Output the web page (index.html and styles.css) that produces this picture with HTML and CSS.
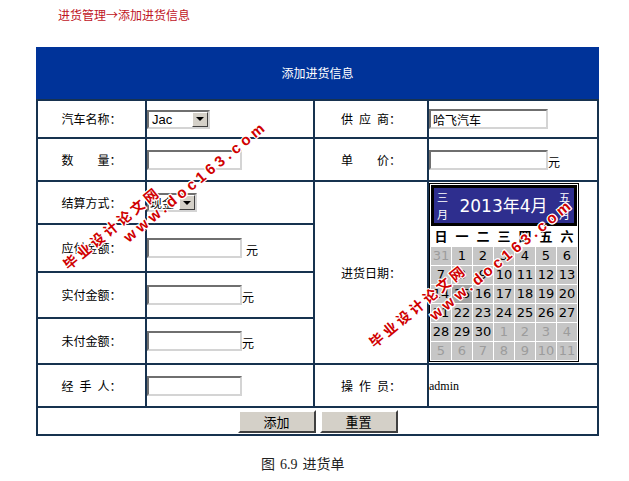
FILE: index.html
```html
<!DOCTYPE html>
<html lang="zh-CN">
<head>
<meta charset="utf-8">
<title>添加进货信息</title>
<link rel="stylesheet" href="styles.css">
</head>
<body>
<div class="crumb">进货管理→添加进货信息</div>

<div class="form">
  <div class="form-head">添加进货信息</div>
  <div class="form-grid">
    <div class="cell label">汽车名称：</div>
    <div class="cell">
      <div class="select sel-car"><span class="sel-text">Jac</span><span class="sel-btn"><span class="arrow"></span></span></div>
    </div>
    <div class="cell label">供&ensp;应&ensp;商：</div>
    <div class="cell"><input class="txt txt-wide" type="text" value="哈飞汽车"></div>

    <div class="cell label">数　　量：</div>
    <div class="cell"><input class="txt" type="text"></div>
    <div class="cell label">单　　价：</div>
    <div class="cell"><div class="field"><input class="txt txt-wide" type="text"><span class="unit">元</span></div></div>

    <div class="cell label">结算方式：</div>
    <div class="cell">
      <div class="select sel-pay"><span class="sel-text sel-cn">现金</span><span class="sel-btn"><span class="arrow"></span></span></div>
    </div>
    <div class="cell label span4">进货日期：</div>
    <div class="cell span4">
      <div class="cal">
        <div class="cal-head">
          <span class="cal-nav"><span class="nav-ch">三</span><span class="nav-ch">月</span></span>
          <span class="cal-title">2013年4月</span>
          <span class="cal-nav"><span class="nav-ch">五</span><span class="nav-ch">月</span></span>
        </div>
        <div class="cal-week"><span>日</span><span>一</span><span>二</span><span>三</span><span>四</span><span>五</span><span>六</span></div>
        <div class="cal-days">
          <span class="other">31</span><span>1</span><span>2</span><span>3</span><span>4</span><span>5</span><span>6</span>
          <span>7</span><span>8</span><span>9</span><span>10</span><span>11</span><span>12</span><span>13</span>
          <span>14</span><span class="today">15</span><span>16</span><span>17</span><span>18</span><span>19</span><span>20</span>
          <span>21</span><span>22</span><span>23</span><span>24</span><span>25</span><span>26</span><span>27</span>
          <span>28</span><span>29</span><span>30</span><span class="other">1</span><span class="other">2</span><span class="other">3</span><span class="other">4</span>
          <span class="other">5</span><span class="other">6</span><span class="other">7</span><span class="other">8</span><span class="other">9</span><span class="other">10</span><span class="other">11</span>
        </div>
      </div>
    </div>

    <div class="cell label">应付金额：</div>
    <div class="cell"><div class="field"><input class="txt" type="text"><span class="unit unit-gap">元</span></div></div>

    <div class="cell label">实付金额：</div>
    <div class="cell"><div class="field"><input class="txt" type="text"><span class="unit">元</span></div></div>

    <div class="cell label">未付金额：</div>
    <div class="cell"><div class="field"><input class="txt" type="text"><span class="unit">元</span></div></div>

    <div class="cell label">经&ensp;手&ensp;人：</div>
    <div class="cell"><input class="txt" type="text"></div>
    <div class="cell label">操&ensp;作&ensp;员：</div>
    <div class="cell"><span class="plain">admin</span></div>

    <div class="cell actions">
      <button class="btn" type="button">添加</button>
      <button class="btn" type="button">重置</button>
    </div>
  </div>
</div>

<div class="caption">图<span class="num">6.9</span>进货单</div>

<div class="wm wm-1"><div class="wm-cn">毕业设计论文网</div><div class="wm-en">www.doc163.com</div></div>
<div class="wm wm-2"><div class="wm-cn">毕业设计论文网</div><div class="wm-en">www.doc163.com</div></div>
</body>
</html>
```

FILE: styles.css
```css
html, body {
  margin: 0;
  padding: 0;
  background: #fff;
}

body {
  width: 629px;
  font-family: "Noto Sans CJK SC", sans-serif;
  font-size: 12px;
  line-height: 14px;
  color: #000;
}

.crumb {
  padding: 8px 0 0 58px;
  color: #c0141e;
  font-size: 12px;
  line-height: 14px;
}

.form {
  width: 563px;
  margin: 25px 0 0 36px;
}

.form-head {
  height: 52px;
  background: #003399;
  color: #fff;
  display: flex;
  align-items: center;
  justify-content: center;
  font-size: 12px;
}

.form-grid {
  display: grid;
  grid-template-columns: 107px 166px 112px 168px;
  grid-template-rows: 36px 41px 41px 46px 44px 44px 41px 26px;
  gap: 2px;
  padding: 2px;
  background: #17324f;
}

.cell {
  background: #fff;
  display: flex;
  align-items: center;
  justify-content: flex-start;
}

.label {
  justify-content: center;
}

.span4 {
  grid-row: span 4;
}

.actions {
  grid-column: 1 / -1;
  justify-content: center;
  gap: 4px;
}

.txt {
  box-sizing: border-box;
  width: 95px;
  height: 20px;
  margin: 0;
  padding: 0 2px;
  border: 2px solid;
  border-color: #6f6f6f #d4d4d4 #d4d4d4 #6f6f6f;
  background: #fff;
  font-family: "Noto Sans CJK SC", sans-serif;
  font-size: 12px;
  color: #000;
  outline: none;
}

.txt-wide {
  width: 119px;
}

.field {
  display: flex;
  align-items: flex-end;
}

.unit {
  line-height: 14px;
  margin-bottom: 1px;
}

.unit-gap {
  margin-left: 4px;
}

.select {
  box-sizing: border-box;
  display: flex;
  height: 19px;
  border: 2px solid;
  border-color: #6f6f6f #d4d4d4 #d4d4d4 #6f6f6f;
  background: #fff;
}

.sel-car {
  width: 63px;
}

.sel-pay {
  width: 50px;
}

.sel-text {
  flex: 1;
  padding-left: 3px;
  font-family: "Liberation Sans", sans-serif;
  font-size: 13px;
  line-height: 15px;
  overflow: hidden;
  white-space: nowrap;
}

.sel-cn {
  font-family: "Noto Sans CJK SC", sans-serif;
  font-size: 12px;
  padding-left: 1px;
}

.sel-btn {
  box-sizing: border-box;
  width: 16px;
  background: #d4d0c8;
  border: 1px solid;
  border-color: #fff #404040 #404040 #fff;
  display: flex;
  align-items: center;
  justify-content: center;
}

.arrow {
  width: 0;
  height: 0;
  border-left: 4px solid transparent;
  border-right: 4px solid transparent;
  border-top: 4px solid #000;
}

.plain {
  font-family: "Liberation Serif", serif;
  font-size: 12px;
}

.btn {
  box-sizing: border-box;
  width: 78px;
  height: 23px;
  margin: 0;
  padding: 0;
  background: #d4d0c8;
  border: 2px solid;
  border-color: #fff #404040 #404040 #fff;
  font-family: "Noto Sans CJK SC", sans-serif;
  font-size: 13px;
  color: #000;
}

/* calendar */
.cal {
  box-sizing: border-box;
  width: 150px;
  border: 1px solid #000;
  padding: 1px;
  background: #fff;
}

.cal-head {
  height: 35px;
  border: 3px solid #000;
  background: #2e2e8e;
  color: #fff;
  display: flex;
  align-items: center;
  padding: 0 4px 0 3px;
}

.cal-nav {
  width: 11px;
  display: flex;
  flex-direction: column;
  gap: 3px;
  align-items: center;
}

.nav-ch {
  display: block;
  font-size: 11px;
  line-height: 14px;
}

.cal-title {
  flex: 1;
  text-align: center;
  font-family: "DejaVu Sans", "Noto Sans CJK SC", sans-serif;
  font-size: 17px;
  line-height: 20px;
}

.cal-week {
  display: grid;
  grid-template-columns: repeat(7, 20px);
  column-gap: 1px;
  height: 20px;
  font-weight: bold;
  font-size: 13px;
  line-height: 20px;
  text-align: center;
}

.cal-days {
  display: grid;
  grid-template-columns: repeat(7, 20px);
  grid-auto-rows: 18px;
  gap: 1px;
  margin-top: 1px;
}

.cal-days span {
  background: #c6c6c6;
  text-align: center;
  font-family: "DejaVu Sans", sans-serif;
  font-size: 13px;
  line-height: 18px;
  color: #000;
}

.cal-days .other {
  color: #9c9c9c;
}

.cal-days .today {
  background: #a4a4a4;
}

.caption {
  margin: 19px 0 0 261px;
  font-size: 14px;
  line-height: 16px;
  color: #222;
}

.caption .num {
  font-family: "Liberation Serif", serif;
  margin: 0 5px;
}

/* watermark overlay */
.wm {
  position: absolute;
  transform: rotate(-39.5deg);
  transform-origin: 0 0;
  color: #d00000;
  font-weight: bold;
  white-space: nowrap;
  pointer-events: none;
  text-shadow: 1px 0 0 #fff, -1px 0 0 #fff, 0 1px 0 #fff, 0 -1px 0 #fff,
               1px 1px 0 #fff, -1px -1px 0 #fff, 1px -1px 0 #fff, -1px 1px 0 #fff;
}

.wm-cn {
  font-family: "Noto Sans CJK SC", sans-serif;
  font-size: 14px;
  line-height: 18px;
  letter-spacing: 3.3px;
}

.wm-en {
  font-family: "Liberation Sans", sans-serif;
  font-size: 15px;
  line-height: 18px;
  letter-spacing: 4px;
  margin-left: 64px;
}

.wm-1 {
  left: 59px;
  top: 259px;
}

.wm-2 {
  left: 365px;
  top: 337px;
}
```
